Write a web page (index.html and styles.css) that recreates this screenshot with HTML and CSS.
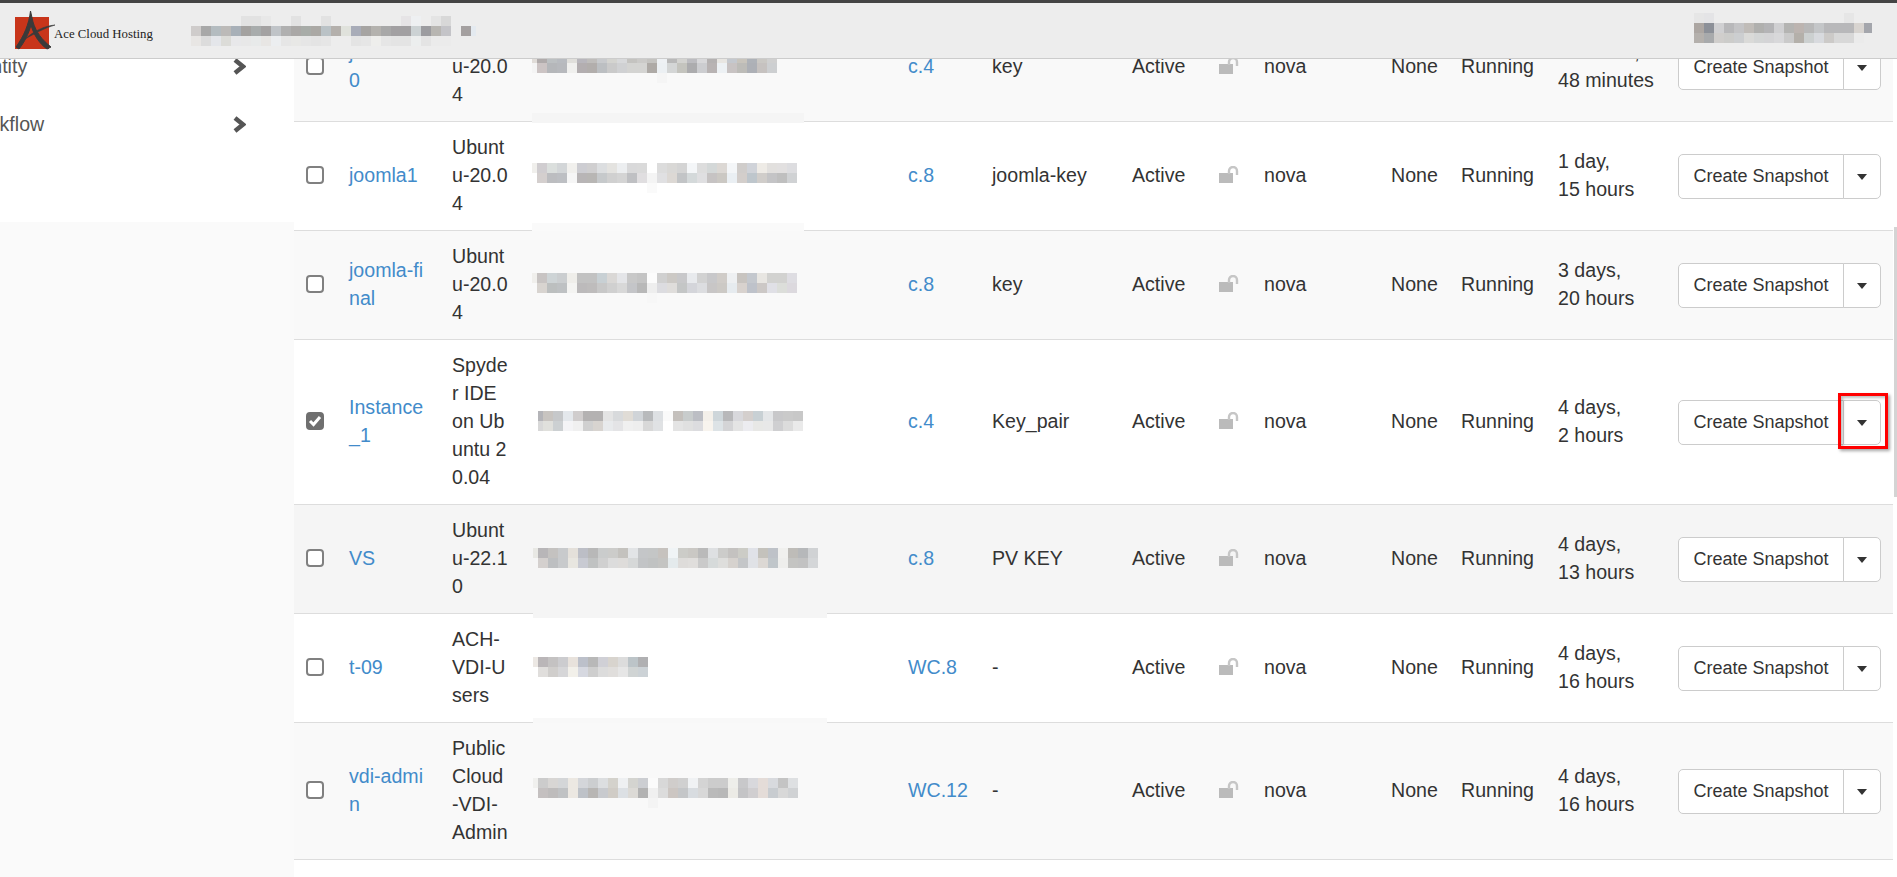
FILE: index.html
```html
<!DOCTYPE html>
<html lang="en">
<head>
    <meta charset="UTF-8">
    <meta name="viewport" content="width=device-width, initial-scale=1.0">
    <title>Instances - Ace Cloud Hosting</title>
    <link rel="stylesheet" href="styles.css">
</head>
<body>
    <header class="navbar">
        <div class="brand">
            <svg class="brand-mark" width="40" height="42" viewBox="0 0 40 42">
                <rect x="0" y="6" width="34" height="32" fill="#c8351a"/>
                <path d="M15.5 0 L18 11 C21 21 27 29 36 36 L32 38 C25 33 19 25 16 14 C14 22 9 32 4 38 L1 36 C9 25 14 13 15.5 0Z" fill="#3a3a3a" stroke="#3a3a3a" stroke-width="1"/>
                <path d="M40 14 C29 15 19 20 10 28 C19 23 29 17 40 14Z" fill="#3a3a3a" stroke="#3a3a3a" stroke-width=".6"/>
            </svg>
            <span class="brand-name">Ace Cloud Hosting</span>
        </div>
        <div class="mosaic plain nav-title" data-rows="- - - - - e2e2e2 e2e2e2 e8e8e8 - - e2e2e2 - - e2e2e2 - - - - - - - e6e4e6 eef0f2 - e4e4e4 d8d8d8|cfcccb a8a8a8 b4bcc0 bcbab8 a8b0b8 a4a2a0 a8acac a4a2a2 c0c4c8 b0b0b0 aaa8a6 a8aca8 aaa8a4 bac2c6 b4b0ac e0e2dc a8acb8 a6a4a2 b4b2ae a8a8a8 a2a0a2 a2a0a2 ccd2d4 9c9ca0 b8b6b2 c4c4c8 - a4a0a0 e4eaf0|e8e6e4 dcdcdc e4e6ea dcdcd8 e8e8ea e8e8e8 e8eaea e8e6e4 eceef0 e6e6e6 e8e8e6 e6e6e6 e4e4e4 e6e6e6 - - e4e4e4 e6e6e6 eeeeec e6e6e6 e4e4e4 e4e4e4 eceeee e4e4e4 ebebeb ebebeb"></div>
        <div class="mosaic plain nav-user" data-rows="e6e6e6 e4e4e6 - - - - - - - - - - - - - e6e6e6|aca6a2 8c9098 d0d0d2 b8b8ba c4c4c6 c0bcb8 b0b0ae b4b4b6 d0d0d2 b4b4b2 bcb4b0 b8b8b8 c4c6c8 b8b8ba b8b8ba b8b8ba d8d4d0 a4a6ac|b4b0ac a8aaac d0cecc ccccca ccced0 dadad8 d4d6d6 d4d4d6 d8d8da cacaca b4b0aa ccd0d0 d8dade cccac8 d8d8d8 d8d8d8 ebebeb"></div>
    </header>

    <div class="page">
        <aside class="sidebar">
            <ul class="side-nav">
                <li><span class="side-label">Identity</span>
                    <svg class="chevron" width="14" height="17" viewBox="0 0 14 17"><polyline points="3,2 11,8.5 3,15" fill="none" stroke="#555" stroke-width="4.5"/></svg>
                </li>
                <li><span class="side-label">Workflow</span>
                    <svg class="chevron" width="14" height="17" viewBox="0 0 14 17"><polyline points="3,2 11,8.5 3,15" fill="none" stroke="#555" stroke-width="4.5"/></svg>
                </li>
            </ul>
        </aside>

        <main class="content">
            <table class="instances">
                <colgroup>
                    <col class="c-check"><col class="c-name"><col class="c-image"><col class="c-ip"><col class="c-flavor"><col class="c-key">
                    <col class="c-status"><col class="c-lock"><col class="c-zone"><col class="c-task"><col class="c-power"><col class="c-age"><col class="c-actions">
                </colgroup>
                <tbody>
                    <tr class="odd">
                        <td><span class="check"></span></td>
                        <td class="wrap"><a href="#">joomla-20</a></td>
                        <td class="wrap">Ubuntu-20.04</td>
                        <td class="ip">
                            <div class="mosaic lift-3" data-rows="e0dcd8 b0abab bcc0c2 b8bbc0 e0dfdb b8b6bc bfbdbb c8cacd d4d4d0 d8d9db c4c3c0 cbcac8 c4c3c0 eef1f4 b9b9b9 d3d3d0 bcbcc0 d8d8da b4b1b1 e8e6e2 c4c8ce c8c4bc aeb2b8 cac8c4 d0d0d0|f4f4f4 ccc4c4 b5b7ba b7b9bd f0f0ee b3aeb0 b2aeac bcbfc2 cacaca d0d1d3 d4d4d2 d4d4d2 aeaaa6 ecf0f3 d4d6d6 c4c4be acacae cccdd0 b8b3b3 edf1f4 c8c3c3 bdbcb8 adb0b6 c6c2c0 cdcfd1|- - - - - - - - - - - - - f5f5f5"></div>
                            <i class="seam seam-1"></i>
                        </td>
                        <td><a href="#">c.4</a></td>
                        <td>key</td>
                        <td>Active</td>
                        <td><svg class="lock" width="20" height="18" viewBox="0 0 20 18"><rect x="0" y="7" width="14" height="10" fill="#bbb"/><path d="M10 8 V5 A4 4 0 0 1 18 5 V9" fill="none" stroke="#c6c6c6" stroke-width="2.4"/></svg></td>
                        <td>nova</td>
                        <td>None</td>
                        <td>Running</td>
                        <td>10 hours,<br>48 minutes</td>
                        <td><div class="btn-group"><button class="btn">Create Snapshot</button><button class="btn btn-caret"><span class="caret"></span></button></div></td>
                    </tr>
                    <tr>
                        <td><span class="check"></span></td>
                        <td class="wrap"><a href="#">joomla1</a></td>
                        <td class="wrap">Ubuntu-20.04</td>
                        <td class="ip">
                            <div class="mosaic lift-2" data-rows="f0efec d0cdd0 dbdfdd d3d6d8 f1f0ed cdcdd2 d0cfd0 dcdee0 e4e3e0 eceef0 d9d9da dadada ffffff dcdcdc d9d8d6 d4d4d4 f4f6f8 dddddd d4d8d8 dcd8d4 f4f6f8 d0cdcb d0d3d9 eeebe6 e2e0de e2e0e0 dddde0|- d4cfce bcbdc0 bdbfc3 f6f6f6 b8b5b6 b8b6b4 c6c9cb d0d0d0 d4d4d4 bfc0c3 e0dee0 f4f4f4 e0e0e2 dcd8d4 c2c4c6 d4d9da dfdfe1 c6c3c3 cbc8c3 eaeff3 d3cecb bec6cc d0cdca c4c4c6 bfbfbf d0d2d4|- - - - - - - - - - - - fafafa"></div>
                            <i class="seam seam-2"></i>
                        </td>
                        <td><a href="#">c.8</a></td>
                        <td>joomla-key</td>
                        <td>Active</td>
                        <td><svg class="lock" width="20" height="18" viewBox="0 0 20 18"><rect x="0" y="7" width="14" height="10" fill="#bbb"/><path d="M10 8 V5 A4 4 0 0 1 18 5 V9" fill="none" stroke="#c6c6c6" stroke-width="2.4"/></svg></td>
                        <td>nova</td>
                        <td>None</td>
                        <td>Running</td>
                        <td>1 day,<br>15 hours</td>
                        <td><div class="btn-group"><button class="btn">Create Snapshot</button><button class="btn btn-caret"><span class="caret"></span></button></div></td>
                    </tr>
                    <tr class="odd">
                        <td><span class="check"></span></td>
                        <td class="wrap"><a href="#">joomla-final</a></td>
                        <td class="wrap">Ubuntu-20.04</td>
                        <td class="ip">
                            <div class="mosaic lift-1" data-rows="f0efec c8c4c3 ced4d6 cbced0 efeeea c2c2c2 c2c2c2 c8d0d4 dad8d6 e4e5e8 c8c8c8 c4c4c4 fcfcfc d0d0d0 ccc9c5 c8c8ca e8eaed d2d2d2 c8c8ca d0ccc8 eef0f2 c8c4c0 c4c8ce e8e6e2 d2d2d0 d2d2d0 dedde2|- d8d4d0 bcbfbf bec1c3 f4f4f2 bcbabb bebcbc c8c8c8 d0d0d0 d8d8d8 c4c5c8 b8b8b8 eeeeee dcdce0 dfdddb c4c6c6 d4d5da dcdde0 c8c6c6 ccc9c5 e6ebef d8d2ce bec2ca ccc8c6 e0e0e6 dcdeda dcd9de|- - - - - - - - - - - - f7f7f7"></div>
                        </td>
                        <td><a href="#">c.8</a></td>
                        <td>key</td>
                        <td>Active</td>
                        <td><svg class="lock" width="20" height="18" viewBox="0 0 20 18"><rect x="0" y="7" width="14" height="10" fill="#bbb"/><path d="M10 8 V5 A4 4 0 0 1 18 5 V9" fill="none" stroke="#c6c6c6" stroke-width="2.4"/></svg></td>
                        <td>nova</td>
                        <td>None</td>
                        <td>Running</td>
                        <td>3 days,<br>20 hours</td>
                        <td><div class="btn-group"><button class="btn">Create Snapshot</button><button class="btn btn-caret"><span class="caret"></span></button></div></td>
                    </tr>
                    <tr>
                        <td>
                            <span class="check checked">
                                <svg width="14" height="12" viewBox="0 0 14 12"><polyline points="2,6 5.5,9.5 12,2" fill="none" stroke="#fff" stroke-width="3"/></svg>
                            </span>
                        </td>
                        <td class="wrap"><a href="#">Instance_1</a></td>
                        <td class="wrap">Spyder IDE on Ubuntu 20.04</td>
                        <td class="ip">
                            <div class="mosaic shift" data-rows="b4b4b8 c8c4c0 c6c8ca e4e8ec d0cdcd b4b2b2 b4b2b2 e4e4e4 d8dadc e0dcd6 d0d4d8 b8babc dde0e3 fafafa c4c0bc c8cccc bcbec4 f4f0ea ced6da b8b8ba d8d8dc d4cfcd c8d0d4 e4e6e8 c8c8ca cacaca c8c8c8|d8d8d8 e0e0dc ccd0d2 f4f4f6 f0f0f0 d0d0d0 d8d4d0 e8eaec e4e4e6 f0f0f0 eeeeee d8d8d8 e0e2e4 ffffff e4e4e4 e0e0e0 dcdcdf f8f4ee dde3e6 d4d4d6 e4e4e4 ececf0 e8e8e6 e8e8e8 cfcfd1 dcdcdc eaeaea"></div>
                        </td>
                        <td><a href="#">c.4</a></td>
                        <td>Key_pair</td>
                        <td>Active</td>
                        <td><svg class="lock" width="20" height="18" viewBox="0 0 20 18"><rect x="0" y="7" width="14" height="10" fill="#bbb"/><path d="M10 8 V5 A4 4 0 0 1 18 5 V9" fill="none" stroke="#c6c6c6" stroke-width="2.4"/></svg></td>
                        <td>nova</td>
                        <td>None</td>
                        <td>Running</td>
                        <td>4 days,<br>2 hours</td>
                        <td><div class="btn-group"><button class="btn">Create Snapshot</button><button class="btn btn-caret"><span class="caret"></span></button><span class="callout"></span></div></td>
                    </tr>
                    <tr class="hover">
                        <td><span class="check"></span></td>
                        <td class="wrap"><a href="#">VS</a></td>
                        <td class="wrap">Ubuntu-22.10</td>
                        <td class="ip">
                            <div class="mosaic wide" data-rows="e8e8e4 b8b6b8 c4c2c0 c8cacc e4e0da bcbec6 b8b8b8 cacccc ccccca c4c2be e2e4e6 c4c6c8 c4c6c6 c6c2be f0f4f6 ccccc8 cac8c4 bababa dee0e2 ccccca c4c2c0 ccccc6 e0e2e8 c4c2bc bec2c8 f0f0ee bebcb8 b6b8ba d0d2d4|- d4d0ce bdbfc1 c8cacc e8e6e0 c8cad2 c0c2c2 d0d0d0 dcdcdc dedcda d6d8d8 c2c4c6 c0c2c2 c4c4c2 e4eaec dedcda e0dedc cacaca d6dada dededc d6d2ce c4c6c8 e0e2e6 dcd8d4 c0c6ca eeeeec c4c4c2 c2c2c2 d4d6d8"></div>
                            <i class="seam seam-3"></i>
                        </td>
                        <td><a href="#">c.8</a></td>
                        <td>PV KEY</td>
                        <td>Active</td>
                        <td><svg class="lock" width="20" height="18" viewBox="0 0 20 18"><rect x="0" y="7" width="14" height="10" fill="#bbb"/><path d="M10 8 V5 A4 4 0 0 1 18 5 V9" fill="none" stroke="#c6c6c6" stroke-width="2.4"/></svg></td>
                        <td>nova</td>
                        <td>None</td>
                        <td>Running</td>
                        <td>4 days,<br>13 hours</td>
                        <td><div class="btn-group"><button class="btn">Create Snapshot</button><button class="btn btn-caret"><span class="caret"></span></button></div></td>
                    </tr>
                    <tr>
                        <td><span class="check"></span></td>
                        <td class="wrap"><a href="#">t-09</a></td>
                        <td class="wrap">ACH-VDI-Users</td>
                        <td class="ip">
                            <div class="mosaic wide" data-rows="ece8e4 bab6b8 c4c2c2 cccccf e8e2dc bcc0ca b8b8b8 d0d0d6 d8d4ce dcdcdc bcc4c8 b0b0b2|- e0dedc d0cecc d6d6d8 f2f0ea d6d8e0 cecece dcdcdc e0dedc e6e6e6 d0d4d4 ccd2d6"></div>
                            <i class="seam seam-4"></i>
                        </td>
                        <td><a href="#">WC.8</a></td>
                        <td>-</td>
                        <td>Active</td>
                        <td><svg class="lock" width="20" height="18" viewBox="0 0 20 18"><rect x="0" y="7" width="14" height="10" fill="#bbb"/><path d="M10 8 V5 A4 4 0 0 1 18 5 V9" fill="none" stroke="#c6c6c6" stroke-width="2.4"/></svg></td>
                        <td>nova</td>
                        <td>None</td>
                        <td>Running</td>
                        <td>4 days,<br>16 hours</td>
                        <td><div class="btn-group"><button class="btn">Create Snapshot</button><button class="btn btn-caret"><span class="caret"></span></button></div></td>
                    </tr>
                    <tr class="odd">
                        <td><span class="check"></span></td>
                        <td class="wrap"><a href="#">vdi-admin</a></td>
                        <td class="wrap">Public Cloud-VDI-Admin</td>
                        <td class="ip">
                            <div class="mosaic wide lift-2" data-rows="f0f0ee cccccc d8d6d4 d4d6d8 ece8e2 d4d6da ccced0 dcdee0 d4d2cc eef0f2 d4d4d0 ccced2 fbfbfb d8d8d8 d0cdcb d0d0d0 f0f2f4 d4d4d4 cccccc cccccc eeeeea c8c8ca d8d8dc e4dcd8 d8dade c4c4c4 dee0e2|- c4c0c0 bebcbc c0c2c4 ece8e2 bec2c8 b8b6b4 c8cace d0ccc6 dce0e4 dcdad6 b2b2b2 f0f0f0 dcdcdc ccc6c2 c4c6c8 d8dce0 d8d8d8 bababa b8b8b8 ecebe6 c4c4c6 d0ced0 e4dcd8 c8ccd0 d8d8d8 d0d2d4|- - - - - - - - - - - - f4f4f4"></div>
                        </td>
                        <td><a href="#">WC.12</a></td>
                        <td>-</td>
                        <td>Active</td>
                        <td><svg class="lock" width="20" height="18" viewBox="0 0 20 18"><rect x="0" y="7" width="14" height="10" fill="#bbb"/><path d="M10 8 V5 A4 4 0 0 1 18 5 V9" fill="none" stroke="#c6c6c6" stroke-width="2.4"/></svg></td>
                        <td>nova</td>
                        <td>None</td>
                        <td>Running</td>
                        <td>4 days,<br>16 hours</td>
                        <td><div class="btn-group"><button class="btn">Create Snapshot</button><button class="btn btn-caret"><span class="caret"></span></button></div></td>
                    </tr>
                </tbody>
            </table>
        </main>
    </div>

    <div class="scroll-thumb"></div>

    <script src="script.js"></script>
</body>
</html>
```

FILE: styles.css
```css
:root {
    --text: #333;
    --link: #428bca;
    --line: #ddd;
}

body {
    margin: 0;
    height: 877px;
    overflow: hidden;
    font-family: "Liberation Sans", Arial, sans-serif;
    font-size: 19.6px;
    line-height: 28px;
    color: var(--text);
    background: #fff;
}

a {
    color: var(--link);
    text-decoration: none;
}

/* top bar sits over the scrolled page */
.navbar {
    position: fixed;
    top: 0;
    left: 0;
    right: 0;
    z-index: 10;
    height: 55px;
    display: flex;
    align-items: flex-start;
    background: #ededed;
    border-top: 3px solid #444;
    border-bottom: 1px solid #ccc;
}

.brand {
    display: flex;
    align-items: flex-start;
    width: 191px;
    flex-shrink: 0;
}

.brand-mark {
    margin: 8px 0 0 15px;
}

.brand-name {
    margin: 19px 0 0 -1px;
    font-family: "Liberation Serif", "Times New Roman", serif;
    font-size: 12.8px;
    line-height: 24px;
    color: #222;
    white-space: nowrap;
}

.nav-title {
    width: 285px;
    margin-top: 13px;
    overflow: hidden;
}

.nav-user {
    width: 178px;
    margin: 10px 25px 0 auto;
    overflow: hidden;
}

.page {
    display: flex;
    height: 100%;
}

.sidebar {
    width: 294px;
    flex-shrink: 0;
    background: #fafafa;
    overflow: hidden;
}

.side-nav {
    list-style: none;
    margin: 0;
    padding: 37px 48px 0 0;
    height: 185px;
    background: #fff;
    color: #555;
}

.side-nav li {
    display: flex;
    align-items: center;
    justify-content: space-between;
    height: 58px;
}

.side-label {
    margin-left: -36px;
}

.content {
    flex: 1;
    padding-top: 13px;
}

.instances {
    width: 1599px;
    table-layout: fixed;
    border-collapse: separate;
    border-spacing: 0;
}

.c-check { width: 44px; }
.c-name { width: 103px; }
.c-image { width: 79px; }
.c-ip { width: 377px; }
.c-flavor { width: 84px; }
.c-key { width: 140px; }
.c-status { width: 87px; }
.c-lock { width: 45px; }
.c-zone { width: 127px; }
.c-task { width: 70px; }
.c-power { width: 97px; }
.c-age { width: 120px; }
.c-actions { width: 226px; }

.instances td {
    padding: 11px 11px 13px;
    vertical-align: middle;
    border-bottom: 1px solid var(--line);
}

.instances tr.odd td {
    background: #f9f9f9;
}

.instances tr.hover td {
    background: #f5f5f5;
}

.instances .wrap {
    word-break: break-all;
}

.instances .ip {
    position: relative;
    padding-left: 12px;
    padding-right: 0;
}

.check {
    display: flex;
    align-items: center;
    justify-content: center;
    box-sizing: border-box;
    width: 18px;
    height: 18px;
    margin-left: 1px;
    border: 2px solid #808080;
    border-radius: 4px;
    background: #fff;
}

.check.checked {
    background: #6f6f6f;
    border-color: #6f6f6f;
}

.lock {
    display: block;
}

.btn-group {
    position: relative;
    display: flex;
    width: 204px;
    margin-top: 3px;
}

.btn {
    box-sizing: border-box;
    height: 45px;
    width: 166px;
    padding: 0;
    border: 1px solid #ccc;
    border-radius: 5px 0 0 5px;
    background: #fff;
    color: var(--text);
    font-family: inherit;
    font-size: 18px;
}

.btn-caret {
    width: 38px;
    margin-left: -1px;
    border-radius: 0 5px 5px 0;
}

.caret {
    display: inline-block;
    vertical-align: middle;
    border-top: 6px solid #333;
    border-left: 5.6px solid transparent;
    border-right: 5.6px solid transparent;
}

/* red annotation drawn over the caret button */
.callout {
    position: absolute;
    left: 160px;
    top: -7px;
    box-sizing: border-box;
    width: 50px;
    height: 56px;
    border: 3px solid #f00;
    box-shadow: 2px 2px 3px rgba(0, 0, 0, 0.35), inset 2px 2px 3px rgba(0, 0, 0, 0.25);
}

/* pixelated blocks that hide the addresses and user names */
.mosaic {
    display: grid;
    grid-template-columns: 5px;
    grid-auto-columns: 10px;
    grid-auto-rows: 10px;
    height: 20px;
}

.mosaic.plain {
    grid-template-columns: none;
    height: 30px;
}

.mosaic.wide { margin-left: 1px; }
.mosaic.shift { margin-left: 6px; }
.mosaic.lift-1 { margin-bottom: 2px; }
.mosaic.lift-2 { margin-bottom: 4px; }
.mosaic.lift-3 { margin-bottom: 6px; }

.seam {
    position: absolute;
    left: 12px;
    width: 272px;
    height: 10px;
}

.seam-1 { bottom: -2px; background: #f5f5f5; }
.seam-2 { bottom: -3px; background: #fafafa; }
.seam-3 { left: 13px; width: 294px; bottom: -5px; background: #f5f5f5; }
.seam-4 { left: 13px; width: 294px; bottom: -6px; background: #f8f8f8; }

.scroll-thumb {
    position: fixed;
    top: 227px;
    right: 0;
    width: 3px;
    height: 270px;
    background: #d4d4d4;
}
```

FILE: script.js
```js
// build the pixel blocks from their colour rows
document.querySelectorAll('.mosaic').forEach(block => {
    block.dataset.rows.split('|').forEach((row, y) => {
        row.split(' ').forEach((colour, x) => {
            if (colour === '-') return;
            const cell = document.createElement('i');
            cell.style.gridRow = y + 1;
            cell.style.gridColumn = x + 1;
            cell.style.background = '#' + colour;
            block.appendChild(cell);
        });
    });
});
```
